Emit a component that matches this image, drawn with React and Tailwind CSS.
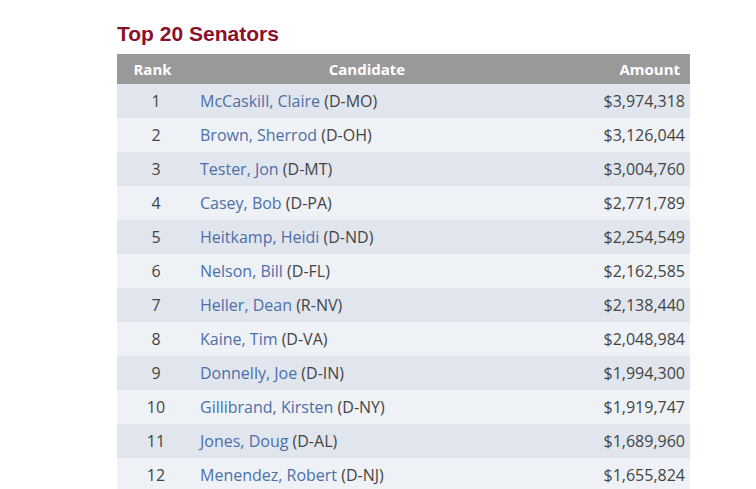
import React from 'react';

const SENATORS = [
    ['McCaskill, Claire', 'D-MO', '$3,974,318'],
    ['Brown, Sherrod', 'D-OH', '$3,126,044'],
    ['Tester, Jon', 'D-MT', '$3,004,760'],
    ['Casey, Bob', 'D-PA', '$2,771,789'],
    ['Heitkamp, Heidi', 'D-ND', '$2,254,549'],
    ['Nelson, Bill', 'D-FL', '$2,162,585'],
    ['Heller, Dean', 'R-NV', '$2,138,440'],
    ['Kaine, Tim', 'D-VA', '$2,048,984'],
    ['Donnelly, Joe', 'D-IN', '$1,994,300'],
    ['Gillibrand, Kirsten', 'D-NY', '$1,919,747'],
    ['Jones, Doug', 'D-AL', '$1,689,960'],
    ['Menendez, Robert', 'D-NJ', '$1,655,824'],
];

const App = () => {
    return (
        <div className="bg-white min-h-screen pl-[117px] pt-[21px] font-['Open_Sans',sans-serif]">
            <h2 className="font-['Liberation_Sans',Arial,sans-serif] font-bold text-[21px] leading-[26px] text-[#8b1029] mb-[7px]">Top 20 Senators</h2>
            <table className="w-[573px] border-collapse text-[16px]">
                <thead>
                    <tr className="bg-[#999999] text-white h-[30px] text-[15px]">
                        <th className="w-[76px] font-bold text-center pr-[5px]">Rank</th>
                        <th className="w-[348px] font-bold text-center">Candidate</th>
                        <th className="font-bold text-right pr-[10px]">Amount</th>
                    </tr>
                </thead>
                <tbody>
                    {SENATORS.map(([name, party, amount], i) => (
                        <tr key={name} className={`h-[34px] ${i % 2 === 0 ? 'bg-[#e1e6ee]' : 'bg-[#eef2f6]'}`}>
                            <td className="text-center text-[#444] pl-[2px]">{i + 1}</td>
                            <td className="pl-[7px] text-[#444]">
                                <span className="text-[#4d6fa8]">{name}</span> ({party})
                            </td>
                            <td className="text-right pr-[5px] text-[#444]">{amount}</td>
                        </tr>
                    ))}
                </tbody>
            </table>
        </div>
    );
};

export default App;
